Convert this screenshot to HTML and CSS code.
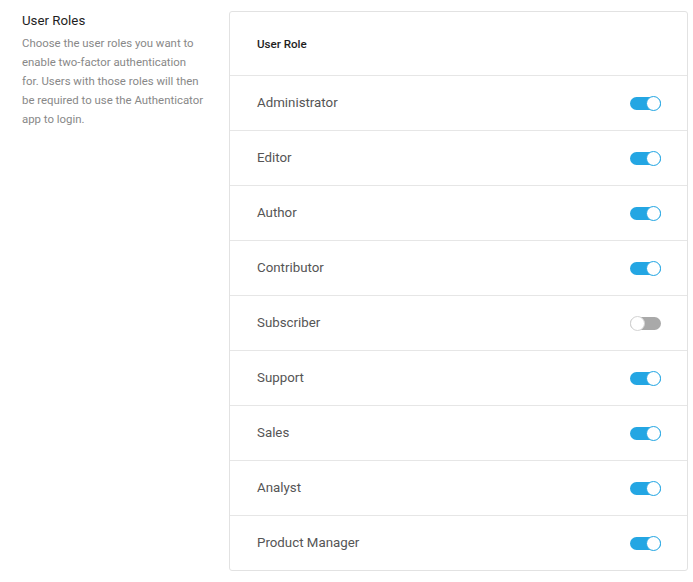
FILE: index.html
```html
<!DOCTYPE html>
<html>
<head>
<meta charset="utf-8">
<link rel="stylesheet" href="styles.css">
</head>
<body>
<div class="page">
  <div class="intro">
    <h2 class="intro-title">User Roles</h2>
    <p class="intro-text">Choose the user roles you want to enable two-factor authentication for. Users with those roles will then be required to use the Authenticator app to login.</p>
  </div>
  <div class="card">
    <div class="card-head">User Role</div>
    <div class="row"><span class="row-label">Administrator</span><span class="toggle on"></span></div>
    <div class="row"><span class="row-label">Editor</span><span class="toggle on"></span></div>
    <div class="row"><span class="row-label">Author</span><span class="toggle on"></span></div>
    <div class="row"><span class="row-label">Contributor</span><span class="toggle on"></span></div>
    <div class="row"><span class="row-label">Subscriber</span><span class="toggle"></span></div>
    <div class="row"><span class="row-label">Support</span><span class="toggle on"></span></div>
    <div class="row"><span class="row-label">Sales</span><span class="toggle on"></span></div>
    <div class="row"><span class="row-label">Analyst</span><span class="toggle on"></span></div>
    <div class="row"><span class="row-label">Product Manager</span><span class="toggle on"></span></div>
  </div>
</div>
</body>
</html>
```
FILE: styles.css
```css
html, body {
  margin: 0;
  padding: 0;
  background: #fff;
}
body {
  font-family: Roboto, "Liberation Sans", sans-serif;
  color: #333;
}
.page {
  display: flex;
  align-items: flex-start;
  padding: 11px 5px 0 22px;
}
.intro {
  width: 182px;
  flex: none;
  margin-right: 25px;
}
.intro-title {
  margin: 2px 0 0;
  font-size: 13.3px;
  font-weight: 400;
  line-height: 16px;
  color: #1e1e1e;
}
.intro-text {
  margin: 5px 0 0;
  font-size: 11.4px;
  line-height: 19px;
  color: #888;
}
.card {
  flex: 1;
  border: 1px solid #e2e2e2;
  border-radius: 3px;
  background: #fff;
}
.card-head {
  height: 63px;
  display: flex;
  align-items: center;
  padding-left: 27px;
  font-size: 11.6px;
  font-weight: 500;
  color: #1e1e1e;
}
.row {
  height: 54px;
  border-top: 1px solid #e6e6e6;
  display: flex;
  align-items: center;
  justify-content: space-between;
  padding: 0 26px 0 27px;
}
.row-label {
  font-size: 13.3px;
  color: #555;
  position: relative;
  top: -1px;
}
.toggle {
  position: relative;
  width: 31px;
  height: 13px;
  border-radius: 7px;
  background: #a9a9a9;
  box-sizing: border-box;
}
.toggle::after {
  content: "";
  position: absolute;
  top: -1px;
  left: 0;
  width: 15px;
  height: 15px;
  border-radius: 50%;
  background: #fff;
  border: 1px solid #d4d4d4;
  box-sizing: border-box;
}
.toggle.on {
  background: #24a6e3;
}
.toggle.on::after {
  left: auto;
  right: 0;
  border-color: #24a6e3;
}
```
